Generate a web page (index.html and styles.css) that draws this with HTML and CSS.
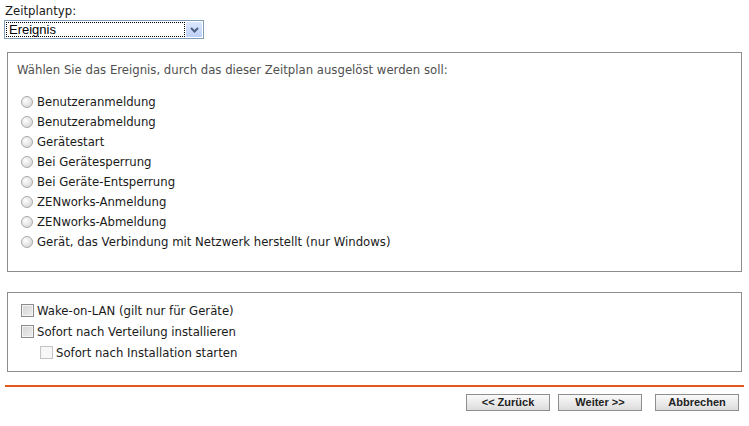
FILE: index.html
```html
<!DOCTYPE html>
<html lang="de">
<head>
    <meta charset="UTF-8">
    <title>Zeitplan</title>
    <link rel="stylesheet" href="styles.css">
</head>
<body>
    <div class="page">
        <label class="field-label">Zeitplantyp:</label>
        <div class="select">
            <span class="select-value">Ereignis</span>
            <span class="select-btn">
                <svg width="9" height="6" viewBox="0 0 9 6"><path d="M1 1 L4.5 4.5 L8 1" fill="none" stroke="#4d6185" stroke-width="2"/></svg>
            </span>
        </div>

        <div class="box events">
            <p class="hint">Wählen Sie das Ereignis, durch das dieser Zeitplan ausgelöst werden soll:</p>
            <ul class="radio-list">
                <li><span class="radio"></span>Benutzeranmeldung</li>
                <li><span class="radio"></span>Benutzerabmeldung</li>
                <li><span class="radio"></span>Gerätestart</li>
                <li><span class="radio"></span>Bei Gerätesperrung</li>
                <li><span class="radio"></span>Bei Geräte-Entsperrung</li>
                <li><span class="radio"></span>ZENworks-Anmeldung</li>
                <li><span class="radio"></span>ZENworks-Abmeldung</li>
                <li><span class="radio"></span>Gerät, das Verbindung mit Netzwerk herstellt (nur Windows)</li>
            </ul>
        </div>

        <div class="box options">
            <ul class="check-list">
                <li><span class="check"></span>Wake-on-LAN (gilt nur für Geräte)</li>
                <li><span class="check"></span>Sofort nach Verteilung installieren</li>
                <li class="sub"><span class="check disabled"></span>Sofort nach Installation starten</li>
            </ul>
        </div>

        <div class="footer">
            <button class="btn">&lt;&lt; Zurück</button>
            <button class="btn">Weiter &gt;&gt;</button>
            <button class="btn cancel">Abbrechen</button>
        </div>
    </div>
</body>
</html>
```

FILE: styles.css
```css
:root {
    --text: #1a1a1a;
    --hint: #505050;
    --box-border: #8c8c8c;
    --accent: #e05a1e;
}

body {
    margin: 0;
    background: #fff;
    color: var(--text);
    font-family: "DejaVu Sans", Verdana, sans-serif;
    font-size: 11.7px;
}

.page {
    padding: 4px 0 0 5px;
}

.field-label {
    display: block;
    line-height: 15px;
    height: 16px;
}

.select {
    display: flex;
    width: 200px;
    height: 19px;
    margin-left: -1px;
    border: 1px solid #7f9db9;
    padding: 1px;
    gap: 1px;
    box-sizing: border-box;
}

.select-value {
    flex: 1;
    border: 1px dotted #000;
    font-family: "Liberation Sans", Arial, sans-serif;
    font-size: 13px;
    line-height: 14px;
    padding-left: 2px;
    color: #000;
}

.select-btn {
    width: 16px;
    display: flex;
    align-items: center;
    justify-content: center;
    background: linear-gradient(#dce7fd, #bdd0f8);
    border-radius: 1px;
}

.box {
    margin-left: 2px;
    width: 735px;
    box-sizing: border-box;
    border: 1px solid var(--box-border);
}

.events {
    margin-top: 13px;
    padding: 9px 0 0 9px;
    height: 220px;
}

.hint {
    margin: 0;
    color: var(--hint);
    line-height: 16px;
}

.radio-list,
.check-list {
    list-style: none;
    margin: 0;
    padding: 0;
}

.radio-list {
    margin-top: 14px;
}

.radio-list li {
    display: flex;
    align-items: center;
    height: 20px;
    padding-left: 4px;
}

.radio {
    width: 12px;
    height: 12px;
    margin-right: 4px;
    border-radius: 50%;
    border: 1px solid #a9a9a9;
    box-sizing: border-box;
    background: radial-gradient(circle at 35% 35%, #fff, #dedede 70%, #c8c8c8);
}

.options {
    margin-top: 20px;
    padding: 7px 0 0 13px;
    height: 80px;
}

.check-list li {
    display: flex;
    align-items: center;
    height: 21px;
}

.check-list li.sub {
    padding-left: 19px;
}

.check {
    width: 13px;
    height: 13px;
    margin-right: 3px;
    box-sizing: border-box;
    border: 1px solid #8c8c8c;
    background: linear-gradient(135deg, #d4d4d4, #eeeeee);
    box-shadow: inset 0 0 0 1px #f4f4f4;
}

.check.disabled {
    border-color: #c4c4c4;
    background: #f7f7f7;
    box-shadow: none;
}

.footer {
    margin-top: 13px;
    border-top: 2px solid var(--accent);
    width: 739px;
    display: flex;
    justify-content: flex-end;
    padding-top: 7px;
    padding-right: 5px;
    box-sizing: border-box;
}

.btn {
    width: 84px;
    height: 17px;
    margin-left: 8px;
    padding: 0;
    border: 1px solid #8e8e8e;
    background: linear-gradient(#fafafa, #dcdcdc);
    font-family: "Liberation Sans", Arial, sans-serif;
    font-size: 11px;
    font-weight: bold;
    color: #222;
    line-height: 15px;
}

.btn.cancel {
    margin-left: 13px;
}
```
